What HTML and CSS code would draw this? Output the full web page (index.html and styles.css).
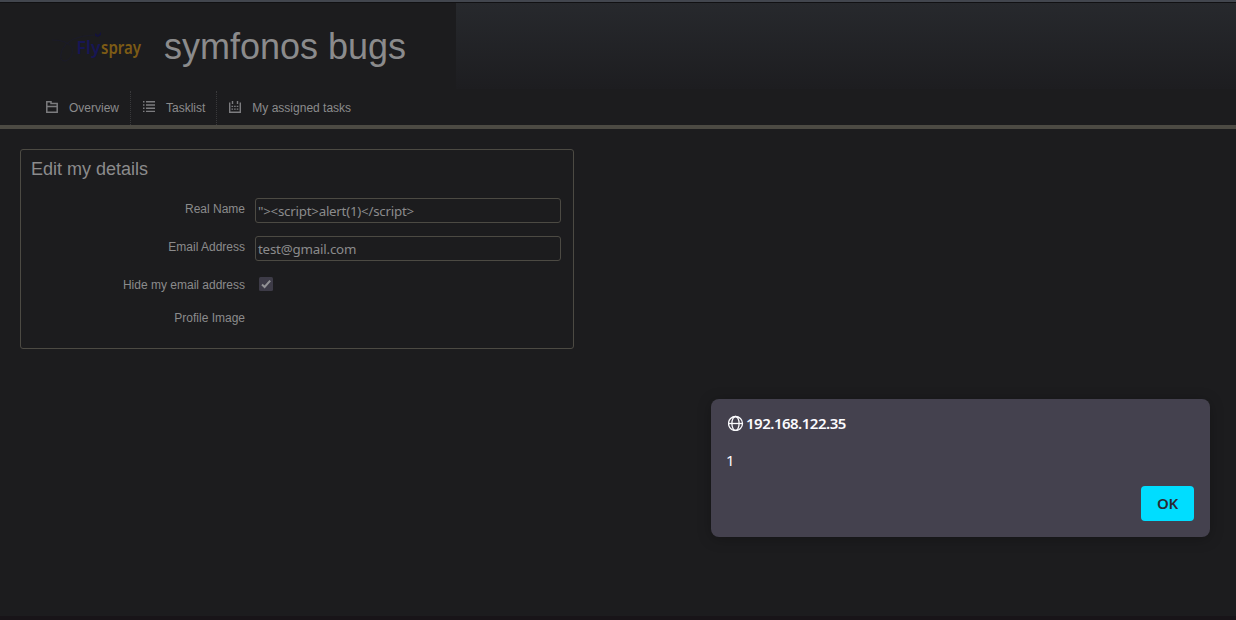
FILE: index.html
```html
<!DOCTYPE html>
<html lang="en">
<head>
<meta charset="utf-8">
<title>symfonos bugs</title>
<link rel="stylesheet" href="styles.css">
</head>
<body>
<header class="header">
  <div class="brand">
    <svg class="logo" width="94" height="50" viewBox="0 -5 94 50">
      <path d="M2 13Q18 13 22 21Q24 30 16 34Q8 35 12 23Q18 9 44 8" fill="none" stroke="#1a1a2c" stroke-width=".8"/>
      <path d="M45 6l3 2 3-3 0 3-3 2-3-1z" fill="#14133a"/>
      <text x="26.5" y="27" textLength="24" lengthAdjust="spacingAndGlyphs" class="logo-fly">Fly</text>
      <text x="51" y="27" textLength="40" lengthAdjust="spacingAndGlyphs" class="logo-spray">spray</text>
    </svg>
    <h1 class="site-title">symfonos bugs</h1>
  </div>
</header>
<nav class="nav">
  <a class="nav-item">
    <svg class="nav-icon" width="12" height="12" viewBox="0 0 12 12" fill="none" stroke="#7c7c7f" stroke-width="1.5"><path d="M.8 11.2V.8H5V2.6H11.2V11.2ZM.8 5.6H11.2"/></svg>
    <span>Overview</span>
  </a>
  <a class="nav-item">
    <svg class="nav-icon" width="12" height="12" viewBox="0 0 12 12" stroke="#7c7c7f" stroke-width="1.4"><path d="M0 .8H1.5M0 4H1.5M0 7.2H1.5M0 10.4H1.5M3 .8H12M3 4H12M3 7.2H12M3 10.4H12"/></svg>
    <span>Tasklist</span>
  </a>
  <a class="nav-item">
    <svg class="nav-icon" width="12" height="12" viewBox="0 0 12 12" fill="none" stroke="#7c7c7f"><path stroke-width="1.4" d="M.7 1.5V11.3H11.3V1.5M3.5 0V3M8.5 0V3"/><path stroke-width="1.2" stroke-dasharray="1.6 1" d="M2.5 5.3H10M2.5 8.2H10"/></svg>
    <span>My assigned tasks</span>
  </a>
</nav>
<main class="content">
  <section class="details">
    <h2 class="details-title">Edit my details</h2>
    <div class="row"><label class="label">Real Name</label><div class="input"><span class="value-name">"&gt;&lt;script&gt;alert(1)&lt;/script&gt;</span></div></div>
    <div class="row"><label class="label">Email Address</label><div class="input"><span class="value-mail">test@gmail.com</span></div></div>
    <div class="row row-check"><label class="label">Hide my email address</label>
      <svg class="check" width="14" height="14" viewBox="0 0 14 14"><rect width="14" height="14" rx="1.5" fill="#3d3b47"/><path d="M3 7.5L5.6 10L11.2 3.7" fill="none" stroke="#929295" stroke-width="2"/></svg>
    </div>
    <div class="row row-image"><label class="label">Profile Image</label></div>
  </section>
</main>
<div class="dialog" role="dialog">
  <div class="dialog-head">
    <svg class="globe" width="16" height="16" viewBox="0 0 16 16" fill="none" stroke="#fbfbfe" stroke-width="1.3"><circle cx="7.5" cy="8.5" r="7"/><ellipse cx="7.5" cy="8.5" rx="3.6" ry="7"/><path d="M.5 8.5H14.5"/></svg>
    <span class="dialog-host">192.168.122.35</span>
  </div>
  <div class="dialog-message">1</div>
  <button class="ok">OK</button>
</div>
</body>
</html>
```
FILE: styles.css
```css
* { box-sizing: border-box; }
body {
  margin: 0;
  height: 620px;
  overflow: hidden;
  display: flex;
  flex-direction: column;
  background: #1c1c1e;
  border-top: 2px solid #42464e;
  border-bottom: 4px solid #181418;
  color: #8b8b8c;
  font: 12px/16px "Liberation Sans", Arial, sans-serif;
}
.header {
  height: 87px;
  flex: none;
  border-top: 1px solid #111113;
  background: linear-gradient(#27292d, #1d1d20);
}
.brand {
  width: 456px;
  height: 86px;
  display: flex;
  align-items: center;
  padding-left: 50px;
  background: #1c1c1e;
}
.logo { flex: none; overflow: visible; margin-top: 2px; }
.logo-fly, .logo-spray { font-family: "Noto Sans", sans-serif; font-weight: 600; }
.logo-fly { fill: #171655; font-size: 18px; }
.logo-spray { fill: #7d5b15; font-size: 17px; }
.site-title { margin: 2px 0 0 20px; font-size: 36px; line-height: 42px; font-weight: 400; }
.nav {
  height: 40px;
  flex: none;
  display: flex;
  padding: 2px 0 0 35px;
  border-bottom: 4px solid #4c4a43;
}
.nav-item {
  display: flex;
  gap: 11px;
  padding: 9px 11px 0;
}
.nav-item + .nav-item { border-left: 1px dotted #39393b; padding-left: 12px; }
.nav-icon { margin-top: 1px; }
.content { padding: 20px; }
.details {
  width: 554px;
  height: 200px;
  padding: 9px 10px;
  border: 1px solid #4c4a43;
  border-radius: 3px;
}
.details-title { margin: 0 0 18px; font-size: 18px; line-height: 21px; font-weight: 400; }
.row { display: flex; height: 38px; gap: 10px; }
.label { width: 214px; padding-top: 3px; text-align: right; }
.input {
  width: 306px;
  height: 25px;
  padding: 0 2px;
  border: 1px solid #4c4a43;
  border-radius: 3px;
  font: 13.33px/25px "Noto Sans", sans-serif;
  white-space: nowrap;
}
.value-name { letter-spacing: -.24px; }
.value-mail { letter-spacing: -.2px; }
.check { margin: 3px 0 0 4px; }
.row-check { height: 33px; }
.dialog {
  position: absolute;
  left: 711px;
  top: 399px;
  width: 499px;
  height: 138px;
  padding: 15px 16px 16px;
  display: flex;
  flex-direction: column;
  border-radius: 8px;
  background: #44414e;
  box-shadow: 0 2px 14px rgba(0, 0, 0, .25);
  color: #fbfbfe;
  font: 15px/18px "Noto Sans", sans-serif;
}
.dialog-head { display: flex; align-items: center; gap: 2px; height: 18px; }
.globe { margin-left: 1px; }
.dialog-host { font-weight: 600; font-size: 15px; letter-spacing: -.5px; }
.dialog-message { margin: 19px 0 0 -1px; height: 18px; font-size: 15px; }
.ok {
  align-self: flex-end;
  width: 53px;
  height: 35px;
  margin-top: 17px;
  padding: 0 0 2px;
  border: 0;
  border-radius: 4px;
  background: #00ddff;
  color: #2b2a33;
  font: 600 15px "Noto Sans", sans-serif;
  letter-spacing: -.3px;
}
```
